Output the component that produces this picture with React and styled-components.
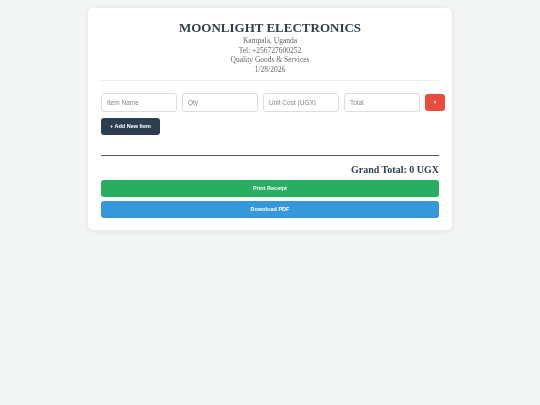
import React, { useState } from 'react';
import styled, { createGlobalStyle } from 'styled-components';

const GlobalStyle = createGlobalStyle`
  html, body {
    margin: 0;
    padding: 0;
    background-color: #f4f5f5;
  }
  body {
    font-family: 'Liberation Sans', Arial, sans-serif;
    -webkit-font-smoothing: antialiased;
  }
`;

const Page = styled.div`
  padding: 8px 0;
`;

const Card = styled.div`
  width: 364px;
  margin: 0 auto;
  box-sizing: border-box;
  padding: 12px 13px 12px;
  background: #fff;
  border-radius: 5px;
  box-shadow: 0 1px 6px rgba(0, 0, 0, 0.09);
  will-change: transform;
`;

const Header = styled.div`
  text-align: center;
  padding-bottom: 5px;
  border-bottom: 1px solid #eee;
  margin-bottom: 12px;
`;

const Title = styled.h1`
  margin: 0;
  font-family: 'Liberation Serif', 'Times New Roman', serif;
  font-size: 13px;
  line-height: 16px;
  color: #2c3e50;
`;

const Info = styled.div`
  font-family: 'Liberation Serif', 'Times New Roman', serif;
  font-size: 7.5px;
  line-height: 9.7px;
  color: #666;
`;

const ItemRow = styled.div`
  display: flex;
  gap: 5px;
  align-items: center;
  width: 344px;
`;

const Field = styled.input`
  width: 76px;
  height: 19px;
  box-sizing: border-box;
  padding: 0 5px;
  border: 1px solid #ddd;
  border-radius: 3px;
  font-family: 'Liberation Sans', Arial, sans-serif;
  font-size: 6.5px;
  color: #333;
  outline: none;

  &::placeholder {
    color: #888;
  }
`;

const RemoveButton = styled.button`
  width: 20px;
  height: 17px;
  border: none;
  border-radius: 3px;
  background: #e74c3c;
  color: #fff;
  font-size: 5px;
  font-weight: 700;
  padding: 0;
  cursor: pointer;
`;

const AddButton = styled.button`
  margin-top: 6px;
  height: 17px;
  padding: 0 9px;
  border: none;
  border-radius: 3px;
  background: #2c3e50;
  color: #fff;
  font-family: 'Liberation Sans', Arial, sans-serif;
  font-size: 5.5px;
  font-weight: 700;
  cursor: pointer;
`;

const Totals = styled.div`
  margin-top: 20px;
  border-top: 1.5px solid #555;
  padding-top: 7px;
  text-align: right;
`;

const GrandTotal = styled.div`
  font-family: 'Liberation Serif', 'Times New Roman', serif;
  font-size: 10px;
  font-weight: 700;
  line-height: 14px;
  color: #2c3e50;
`;

const Action = styled.button`
  display: block;
  width: 100%;
  height: 17px;
  margin-top: ${(p) => (p.$first ? '3px' : '4px')};
  border: none;
  border-radius: 3px;
  background: ${(p) => p.$bg};
  color: #fff;
  font-family: 'Liberation Sans', Arial, sans-serif;
  font-size: 5.5px;
  font-weight: 700;
  cursor: pointer;
`;

export default function App() {
  const [items] = useState([{ id: 1 }]);

  return (
    <>
      <GlobalStyle />
      <Page>
        <Card>
          <Header>
            <Title>MOONLIGHT ELECTRONICS</Title>
            <Info>Kampala, Uganda</Info>
            <Info>Tel: +256727600252</Info>
            <Info>Quality Goods &amp; Services</Info>
            <Info>1/28/2026</Info>
          </Header>
          {items.map((item) => (
            <ItemRow key={item.id}>
              <Field placeholder="Item Name" />
              <Field placeholder="Qty" />
              <Field placeholder="Unit Cost (UGX)" />
              <Field placeholder="Total" readOnly />
              <RemoveButton>×</RemoveButton>
            </ItemRow>
          ))}
          <AddButton>+ Add New Item</AddButton>
          <Totals>
            <GrandTotal>Grand Total: 0 UGX</GrandTotal>
          </Totals>
          <Action $first $bg="#27ae60">Print Receipt</Action>
          <Action $bg="#3498db">Download PDF</Action>
        </Card>
      </Page>
    </>
  );
}
